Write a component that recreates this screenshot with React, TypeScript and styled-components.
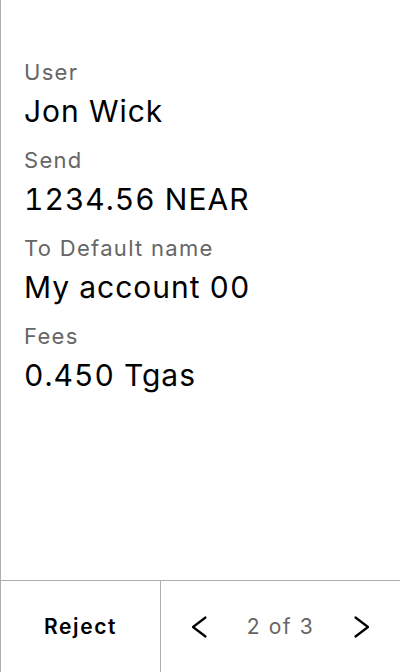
import React from "react";
import styled, { createGlobalStyle } from "styled-components";

const Global = createGlobalStyle`
  html, body { margin: 0; padding: 0; background: #fff; }
  body { font-family: Inter, "Noto Sans", sans-serif; }
  * { box-sizing: border-box; }
`;

const Screen = styled.div`
  width: 400px;
  height: 672px;
  display: flex;
  flex-direction: column;
  border-left: 1px solid #adadad;
  background: #fff;
`;

const Content = styled.div`
  flex: 1;
  padding: 59px 24px 0 23px;
  display: flex;
  flex-direction: column;
`;

const Label = styled.div`
  font-size: 22px;
  line-height: 26px;
  letter-spacing: 1.3px;
  color: #666666;
  margin-bottom: 8px;
`;

const Value = styled.div`
  font-size: 30px;
  line-height: 36px;
  letter-spacing: 1px;
  font-feature-settings: "tnum" 1;
  color: #000;
  margin-bottom: 18px;
`;

const Footer = styled.div`
  height: 92px;
  border-top: 1px solid #adadad;
  display: grid;
  grid-template-columns: 160px 1fr;
`;

const RejectButton = styled.button`
  border: none;
  border-right: 1px solid #adadad;
  background: transparent;
  font-family: inherit;
  font-size: 21px;
  font-weight: 600;
  letter-spacing: 1.6px;
  color: #000;
  padding: 0;
  display: flex;
  align-items: center;
  justify-content: center;
`;

const Pager = styled.div`
  display: flex;
  align-items: center;
  justify-content: space-between;
  padding: 0 30px 0 30px;
`;

const NavButton = styled.button`
  border: none;
  background: transparent;
  padding: 0;
  width: 17px;
  height: 24px;
  display: flex;
  align-items: center;
  justify-content: center;
`;

const PageText = styled.span`
  font-size: 21px;
  letter-spacing: 1.6px;
  color: #666666;
`;

const Chevron = ({ dir }: { dir: "left" | "right" }) => (
  <svg width="17" height="24" viewBox="0 0 17 24" fill="none">
    <polyline
      points={dir === "left" ? "14.5,2.5 2,12 14.5,21.5" : "2.5,2.5 15,12 2.5,21.5"}
      stroke="#000"
      strokeWidth="2.2"
      strokeLinecap="round"
      strokeLinejoin="round"
    />
  </svg>
);

const rows = [
  { label: "User", value: "Jon Wick" },
  { label: "Send", value: "1234.56 NEAR" },
  { label: "To Default name", value: "My account 00" },
  { label: "Fees", value: "0.450 Tgas" },
];

export default function App() {
  return (
    <>
      <Global />
      <Screen>
        <Content>
          {rows.map((r) => (
            <React.Fragment key={r.label}>
              <Label>{r.label}</Label>
              <Value>{r.value}</Value>
            </React.Fragment>
          ))}
        </Content>
        <Footer>
          <RejectButton>Reject</RejectButton>
          <Pager>
            <NavButton aria-label="Previous">
              <Chevron dir="left" />
            </NavButton>
            <PageText>2 of 3</PageText>
            <NavButton aria-label="Next">
              <Chevron dir="right" />
            </NavButton>
          </Pager>
        </Footer>
      </Screen>
    </>
  );
}
